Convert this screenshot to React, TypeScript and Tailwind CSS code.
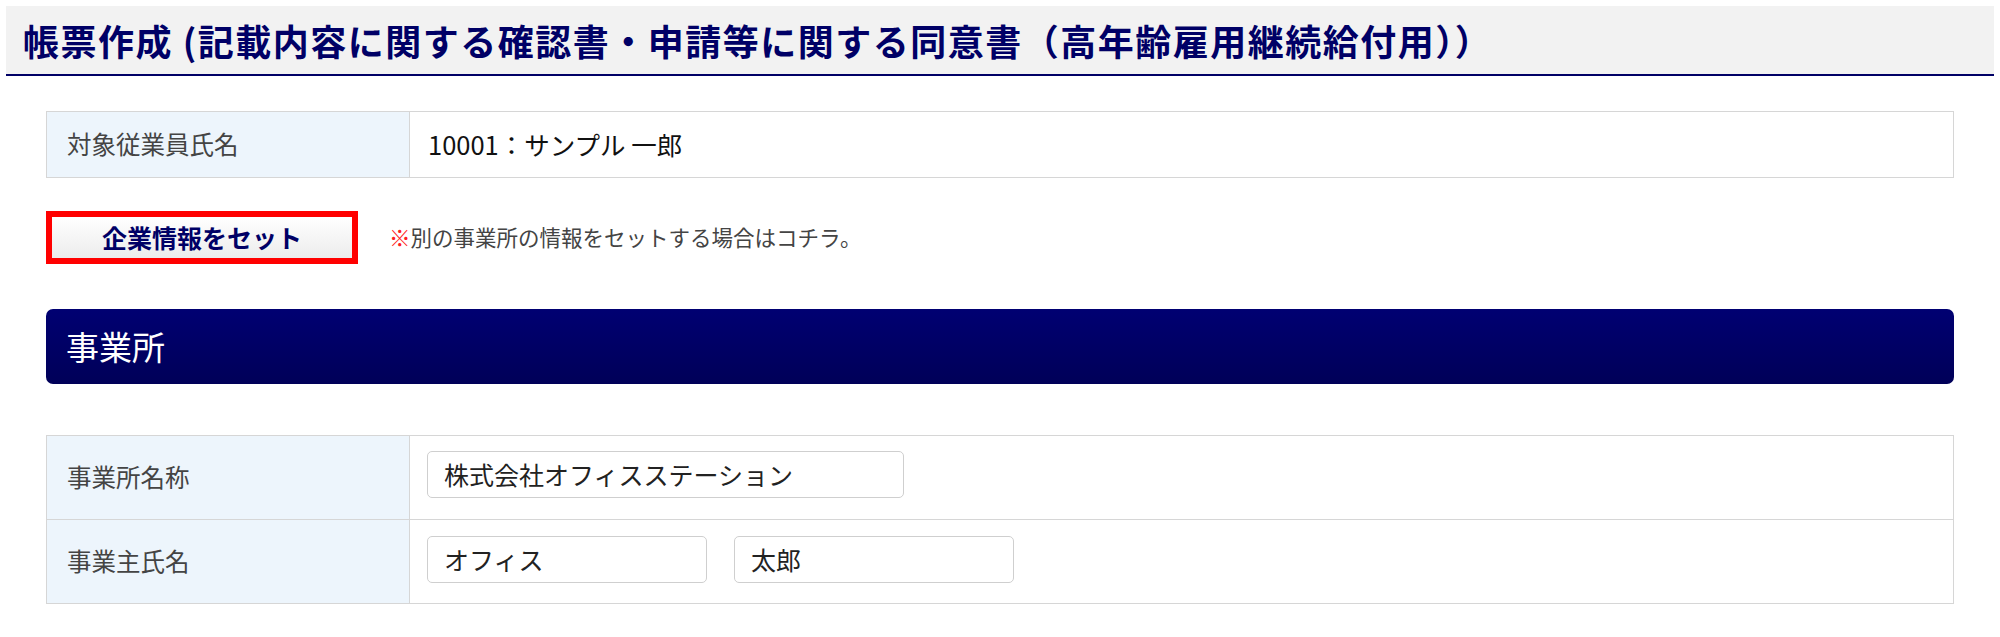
const jp = { fontFamily: '"Noto Sans CJK JP", "Noto Sans", sans-serif' };

function LabelCell({ children }: { children: React.ReactNode }) {
  return (
    <div className="w-[363px] shrink-0 bg-[#edf5fc] border-r border-[#d6d6d6] flex items-center pl-[20px] text-[24.5px] text-[#444]">
      {children}
    </div>
  );
}

function TextBox({ value, width }: { value: string; width: string }) {
  return (
    <div className={`${width} h-[47px] border border-[#cfcfcf] rounded-[5px] bg-white flex items-center px-[16px] text-[25px] text-[#222]`}>
      {value}
    </div>
  );
}

export default function App() {
  return (
    <div className="w-[2000px] h-[637px] bg-white px-[6px] pt-[6px]" style={jp}>
      {/* page title */}
      <div className="h-[70px] bg-[#f2f2f2] border-b-2 border-[#000066] flex items-center pl-[17px]">
        <h1 className="text-[36px] font-bold text-[#000066] leading-none tracking-[1.5px]">
          帳票作成 (記載内容に関する確認書・申請等に関する同意書（高年齢雇用継続給付用））
        </h1>
      </div>

      <div className="px-[40px]">
        {/* employee */}
        <div className="mt-[35px] border border-[#d6d6d6] flex h-[67px]">
          <LabelCell>対象従業員氏名</LabelCell>
          <div className="flex items-center pl-[18px] text-[25.5px] text-[#111]">10001：サンプル 一郎</div>
        </div>

        {/* company info button */}
        <div className="mt-[33px] flex items-center">
          <button className="w-[312px] h-[53px] border-[6px] border-[#ff0000] bg-gradient-to-b from-white to-[#ececec] text-[25px] font-bold text-[#000066]">
            企業情報をセット
          </button>
          <p className="ml-[31px] text-[21.5px] text-[#444]">
            <span className="text-[#ff2020] font-bold">※</span>別の事業所の情報をセットする場合はコチラ。
          </p>
        </div>

        {/* section header */}
        <div className="mt-[45px] h-[75px] rounded-[7px] bg-gradient-to-b from-[#000072] to-[#000058] flex items-center pl-[20px]">
          <h2 className="text-[33px] text-white font-normal">事業所</h2>
        </div>

        {/* office table */}
        <div className="mt-[51px] border border-[#d6d6d6]">
          <div className="flex h-[84px] border-b border-[#d6d6d6]">
            <LabelCell>事業所名称</LabelCell>
            <div className="pl-[17px] pt-[15px]">
              <TextBox value="株式会社オフィスステーション" width="w-[477px]" />
            </div>
          </div>
          <div className="flex h-[83px]">
            <LabelCell>事業主氏名</LabelCell>
            <div className="flex items-start pl-[17px] pt-[16px] gap-[27px]">
              <TextBox value="オフィス" width="w-[280px]" />
              <TextBox value="太郎" width="w-[280px]" />
            </div>
          </div>
        </div>
      </div>
    </div>
  );
}
